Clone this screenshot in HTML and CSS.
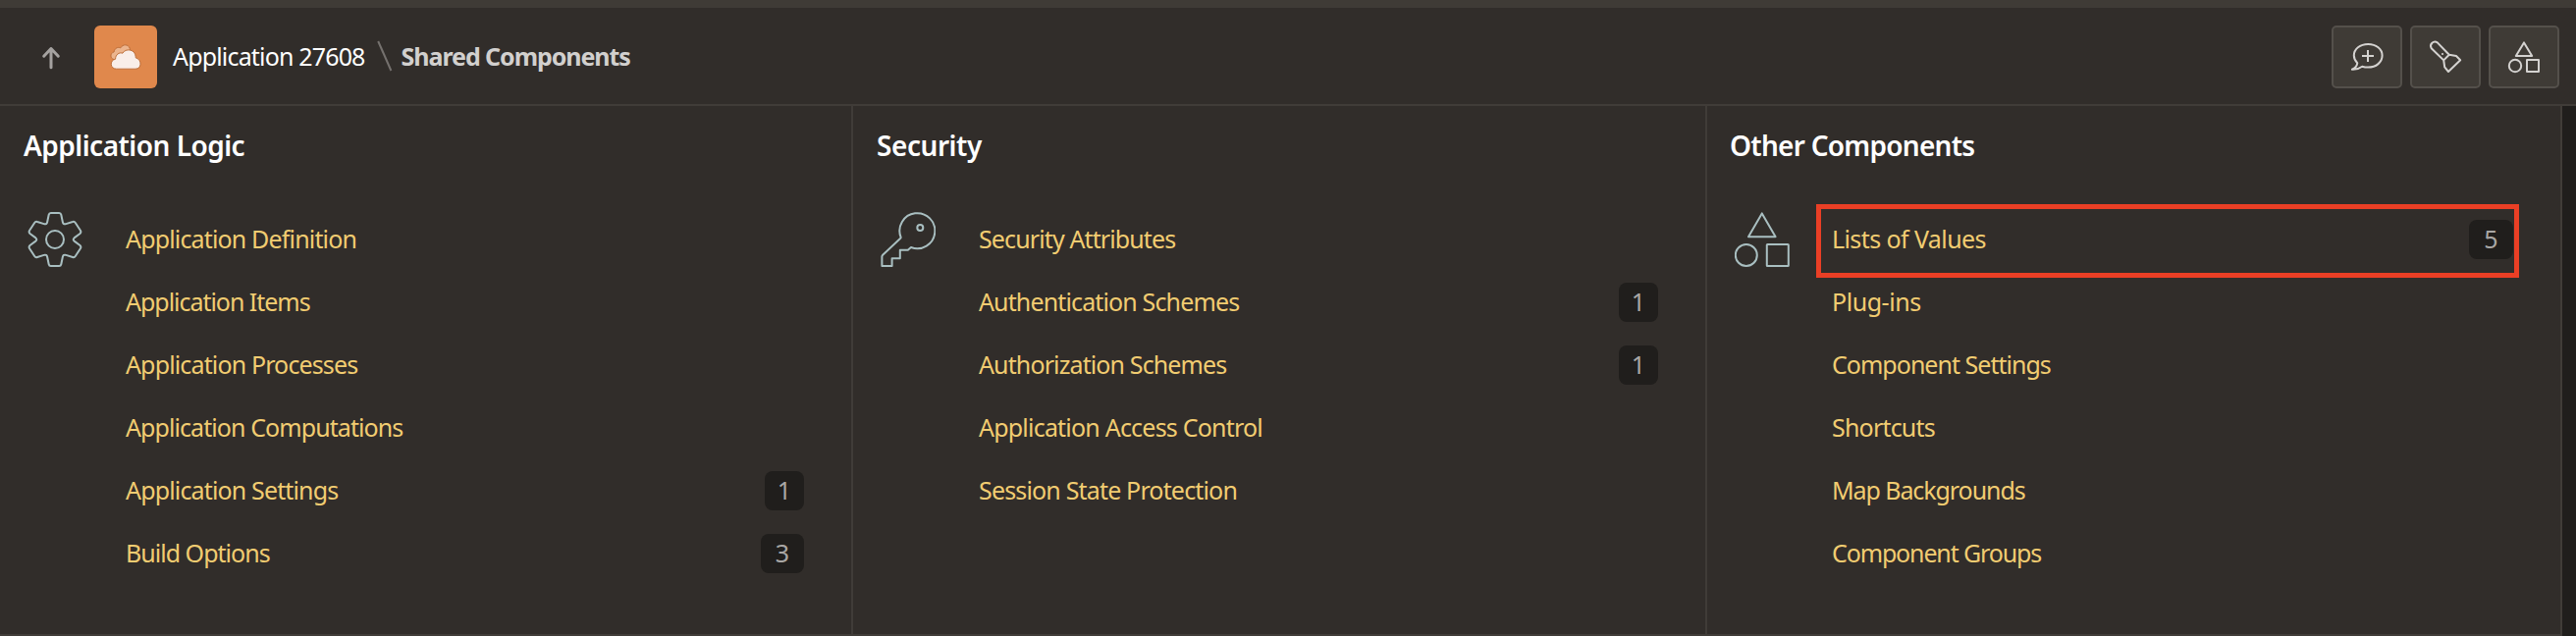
FILE: index.html
```html
<!DOCTYPE html>
<html lang="en">
<head>
<meta charset="utf-8">
<title>Shared Components</title>
<link rel="stylesheet" href="styles.css">
</head>
<body>
<header class="topbar">
  <svg class="up" viewBox="0 0 32 32"><path d="M16 26.8V7.5M8.7 15.2 16 7.5l7.3 7.7"/></svg>
  <div class="logo">
    <svg viewBox="0 0 64 64">
      <path class="cloud-back" d="M20 34.5C16.2 33.8 15.6 28.4 20.2 26.8C20.6 23.2 24 21.6 26.8 22.8C29 18.8 34.6 18.8 36.2 23.2L37 30L24 36Z"/>
      <path class="cloud-front" d="M22.6 44.2C16 44.2 15.4 35.5 21.6 34.2C21.6 29.6 25.4 27 29 28.2C31.6 22.8 42 24 42.2 31.8V32.8C48.8 34.6 48.6 44.2 42 44.2Z"/>
    </svg>
  </div>
  <nav class="crumbs">
    <a class="crumb" style="letter-spacing:-.83px">Application 27608</a>
    <svg class="slash" viewBox="0 0 16 32"><path d="M1.2 1 14.4 31"/></svg>
    <span class="crumb current" style="letter-spacing:-1.06px">Shared Components</span>
  </nav>
  <div class="tools">
    <button class="tool" aria-label="Feedback"><svg viewBox="0 0 68 60"><path d="M24.3 36.2C22 34 20.8 31.5 20.8 28.6C20.8 21.9 27 17 35.2 17S49.6 21.9 49.6 28.6S43.5 40.6 35.2 40.6Q32 40.6 29.2 39.7Q24.5 43.2 18.9 42.8Q23.6 41 24.3 36.2ZM35 23v12M29 29h12"/></svg></button>
    <button class="tool" aria-label="Search"><svg viewBox="0 0 68 60"><path d="M32.2 33.4 19.7 21.2A4.3 4.3 0 0 1 25.8 15.4L37.8 27.8ZM37.8 27.8 45 29 49.2 33.2 37 45 33.2 40.4 32.2 33.4"/><circle class="dot" cx="31" cy="27" r="1.1"/></svg></button>
    <button class="tool" aria-label="Shared components"><svg viewBox="0 0 68 60"><path d="M34 15.4 42.2 29H25.8Z"/><circle cx="25" cy="39" r="6.2"/><path d="M37 33h12v12H37Z"/></svg></button>
  </div>
</header>
<main class="main">
  <div class="columns">
    <section class="column">
      <h2 class="title" style="letter-spacing:-.52px">Application Logic</h2>
      <div class="group">
        <svg class="icon" viewBox="0 0 56 56"><path id="gear-half" d="M28 1H32.2Q33.9 1 34.3 2.8L35.8 10Q36.4 13 39.2 12.1L46 10Q47.8 9.4 48.8 11L53.9 18.8Q55 20.6 53.5 22L47.6 26.4Q45.8 28 47.6 29.6L53.5 34Q55 35.4 53.9 37.2L48.8 45Q47.8 46.6 46 46L39.2 43.9Q36.4 43 35.8 46L34.3 53.2Q33.9 55 32.2 55H28"/><use href="#gear-half" transform="matrix(-1 0 0 1 56 0)"/><circle cx="28" cy="28" r="9"/></svg>
        <ul class="list">
          <li class="row"><a class="link" style="letter-spacing:-.84px">Application Definition</a></li>
          <li class="row"><a class="link" style="letter-spacing:-1.03px">Application Items</a></li>
          <li class="row"><a class="link" style="letter-spacing:-.86px">Application Processes</a></li>
          <li class="row"><a class="link" style="letter-spacing:-.92px">Application Computations</a></li>
          <li class="row"><a class="link" style="letter-spacing:-.85px">Application Settings</a><span class="badge narrow">1</span></li>
          <li class="row"><a class="link" style="letter-spacing:-.98px">Build Options</a><span class="badge">3</span></li>
        </ul>
      </div>
    </section>
    <section class="column">
      <h2 class="title" style="letter-spacing:-.45px">Security</h2>
      <div class="group">
        <svg class="icon" viewBox="0 0 56 56"><path d="M20.6 25.7A18 18 0 1 1 31 36L27.8 38.8H19.8V47.3H11.6V55H1.4V45.6Q1.4 44.6 2.2 43.8L20 27Q20.8 26.4 20.6 25.7Z"/><circle cx="40.3" cy="16" r="3"/></svg>
        <ul class="list">
          <li class="row"><a class="link" style="letter-spacing:-.88px">Security Attributes</a></li>
          <li class="row"><a class="link" style="letter-spacing:-.86px">Authentication Schemes</a><span class="badge narrow">1</span></li>
          <li class="row"><a class="link" style="letter-spacing:-.88px">Authorization Schemes</a><span class="badge narrow">1</span></li>
          <li class="row"><a class="link" style="letter-spacing:-.79px">Application Access Control</a></li>
          <li class="row"><a class="link" style="letter-spacing:-.83px">Session State Protection</a></li>
        </ul>
      </div>
    </section>
    <section class="column last">
      <h2 class="title" style="letter-spacing:-.74px">Other Components</h2>
      <div class="group">
        <svg class="icon" viewBox="0 0 56 56"><path d="M27.8 1.4 41.6 25.2H14Z"/><circle cx="11.8" cy="44" r="11"/><rect x="32.8" y="33" width="22" height="22" rx=".6"/></svg>
        <ul class="list">
          <li class="row marked"><a class="link" style="letter-spacing:-.59px">Lists of Values</a><span class="badge">5</span></li>
          <li class="row"><a class="link" style="letter-spacing:-.45px">Plug-ins</a></li>
          <li class="row"><a class="link" style="letter-spacing:-.98px">Component Settings</a></li>
          <li class="row"><a class="link" style="letter-spacing:-.8px">Shortcuts</a></li>
          <li class="row"><a class="link" style="letter-spacing:-1.08px">Map Backgrounds</a></li>
          <li class="row"><a class="link" style="letter-spacing:-1.14px">Component Groups</a></li>
        </ul>
      </div>
    </section>
  </div>
</main>
</body>
</html>
```
FILE: styles.css
```css
* { box-sizing: border-box; }
body {
  margin: 0;
  height: 648px;
  overflow: hidden;
  display: flex;
  flex-direction: column;
  background: #201e1c;
  color: #fff;
  font: 25px/34px "Noto Sans", "Open Sans", sans-serif;
}
svg {
  display: block;
  flex: none;
  fill: none;
  stroke: currentColor;
  stroke-width: 2;
  stroke-linejoin: round;
}
.topbar {
  flex: none;
  height: 108px;
  padding: 2px 17px 0 36px;
  display: flex;
  align-items: center;
  border-top: 8px solid #3f3b36;
  border-bottom: 2px solid #403c38;
  background: #312d2a;
}
.up { width: 32px; height: 32px; color: #a5a2a0; stroke-width: 3; stroke-linecap: round; }
.logo { width: 64px; height: 64px; margin-left: 28px; border-radius: 6px; background: #e0884c; }
.logo svg { width: 64px; height: 64px; stroke: #bd6f3b; stroke-width: 1; }
.cloud-back { fill: #ecb58e; }
.cloud-front { fill: #f9eee9; }
.crumbs { margin-left: 16px; display: flex; align-items: center; }
.crumb { padding-bottom: 2px; white-space: nowrap; }
.current { font-weight: 700; color: #d2d0ce; }
.slash { width: 16px; height: 32px; margin: 0 9px 2px 12px; color: #75716e; }
.tools { margin-left: auto; display: flex; gap: 8px; }
.tool {
  width: 72px;
  height: 64px;
  padding: 0;
  border: 2px solid #54504b;
  border-radius: 5px;
  background: #3f3b36;
  color: #d4d2d0;
}
.tool svg { width: 68px; height: 60px; }
.tool .dot { fill: currentColor; stroke: none; }
.main { flex: 1; padding-right: 14px; }
.columns {
  height: 540px;
  display: grid;
  grid-template-columns: 869px 870px 871px;
  border-bottom: 2px solid #403c38;
  background: #312d2a;
}
.column { padding: 21px 48px 0 24px; border-right: 2px solid #403c38; }
.column.last { padding-left: 23px; }
.title { margin: 0; font-size: 28px; line-height: 38px; font-weight: 600; white-space: nowrap; }
.group { margin-top: 45px; display: flex; align-items: flex-start; }
.icon { width: 56px; height: 56px; margin: 4px 44px 0 4px; color: #a9bfc1; }
.last .icon { margin: 4px 43px 0 5px; }
.list { flex: 1; margin: 0; padding: 0; list-style: none; }
.row { position: relative; height: 64px; display: flex; align-items: center; justify-content: space-between; }
.link { padding-bottom: 2px; color: #f1cc71; white-space: nowrap; }
.badge {
  width: 44px;
  height: 40px;
  padding-top: 2px;
  border-radius: 8px;
  background: #201e1c;
  color: #a9a7a5;
  text-align: center;
}
.last .badge { width: 45px; }
.badge.narrow { width: 40px; }
.marked::after {
  content: "";
  position: absolute;
  top: -4px;
  right: -6px;
  bottom: -7px;
  left: -16px;
  border: 5px solid #ea3f25;
}
```
